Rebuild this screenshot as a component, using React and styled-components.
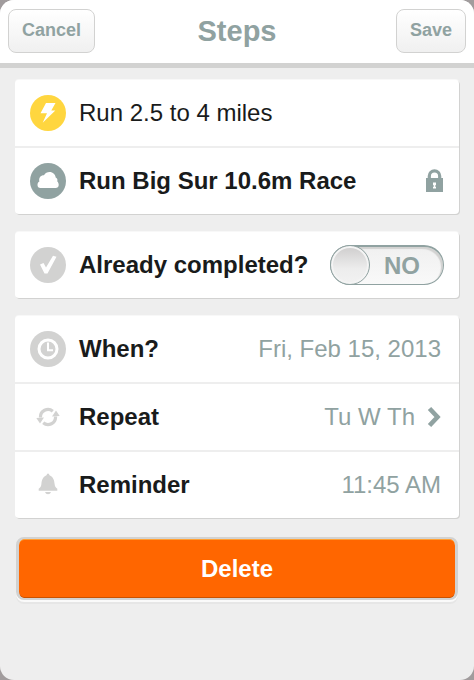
import React, { useState } from 'react';
import styled, { createGlobalStyle } from 'styled-components';

const slate = '#90a2a1';
const pale = '#d2d2d1';
const ink = '#191b1b';

const GlobalStyle = createGlobalStyle`
  * { box-sizing: border-box; }
  body {
    margin: 0;
    background: #a19c9d;
    font-family: 'Liberation Sans', Arial, Helvetica, sans-serif;
    color: ${ink};
  }
  button { font-family: inherit; cursor: pointer; }
`;

const Screen = styled.div`
  min-height: 100vh;
  background: #eeeeee;
  border-radius: 14px;
  overflow: hidden;
`;

const Header = styled.header`
  display: grid;
  grid-template-columns: 1fr auto 1fr;
  align-items: center;
  height: 68px;
  padding: 0 8px 1px;
  background: #ffffff;
  border-bottom: 5px solid ${pale};
`;

const Title = styled.h1`
  margin: 0;
  font-size: 29px;
  line-height: 36px;
  font-weight: bold;
  color: ${slate};
`;

const HeaderButton = styled.button`
  justify-self: ${(p) => p.$side};
  height: 44px;
  padding: 0 13px 2px;
  font-size: 18px;
  font-weight: bold;
  color: ${slate};
  background: linear-gradient(#ffffff, #f0f0f0);
  border: 1px solid ${pale};
  border-radius: 8px;
`;

const Main = styled.main`
  display: flex;
  flex-direction: column;
  gap: 18px;
  padding: 12px 15px 24px;
`;

const Card = styled.ul`
  margin: 0;
  padding: 0;
  list-style: none;
  background: #ffffff;
  border-radius: 4px;
  box-shadow: 1px 1px 0 ${pale}, 0 -1px 0 #f8f8f8;
`;

const Item = styled.li`
  & + & { border-top: 2px solid #eeeeee; }
`;

const Row = styled.div`
  display: flex;
  align-items: center;
  gap: 13px;
  width: 100%;
  height: 66px;
  padding: 0 ${(p) => (p.$flush ? 15 : 18)}px 0 15px;
  font-size: 24px;
  line-height: 28px;
  color: ${ink};
  text-align: left;
  background: none;
  border: 0;
`;

const Badge = styled.span`
  display: flex;
  flex: none;
  align-items: center;
  justify-content: center;
  width: 36px;
  height: 36px;
  border-radius: 50%;
  background: ${(p) => p.$fill || 'transparent'};
`;

const Label = styled.span`
  flex: 1;
  white-space: nowrap;
  font-weight: ${(p) => (p.$regular ? 'normal' : 'bold')};
`;

const Value = styled.span`
  display: flex;
  align-items: center;
  gap: 12px;
  white-space: nowrap;
  color: ${slate};
`;

const Toggle = styled.span`
  position: relative;
  display: flex;
  align-items: center;
  width: 114px;
  height: 40px;
  border: 1px solid ${slate};
  border-top-width: 2px;
  border-radius: 20px;
  background: linear-gradient(#f0f0f0, #f9f9f9);
  box-shadow: inset -2px 2px 1px ${pale};
`;

const ToggleInput = styled.input`
  position: absolute;
  inset: 0;
  width: 100%;
  height: 100%;
  margin: 0;
  opacity: 0;
  cursor: pointer;
`;

const Knob = styled.span`
  order: ${(p) => (p.$on ? 2 : 0)};
  width: 40px;
  height: 40px;
  margin: -2px -1px -1px;
  border: 1px solid ${slate};
  border-radius: 50%;
  background: linear-gradient(#d3d2d2 10%, #ededed 60%, #f2f2f2);
  box-shadow: inset 0 0 0 2px #f4f4f4;
`;

const ToggleText = styled.span`
  flex: 1;
  order: 1;
  padding: 0 8px 0 0;
  text-align: center;
  font-weight: bold;
  color: ${slate};
`;

const DeleteButton = styled.button`
  height: 63px;
  margin: 1px 1px 0;
  font-size: 24px;
  font-weight: bold;
  color: #ffffff;
  background: #ff6600;
  background-clip: padding-box;
  border: solid ${pale};
  border-width: 2px 3px;
  border-radius: 8px;
  box-shadow: inset 0 1px 0 #ffa033, inset 0 -1px 0 #c95200, 0 2px 0 #fafafa, 0 4px 0 #e6e6e6;
`;

const Bolt = () => (
  <svg width="16" height="20" viewBox="0 0 16 20" aria-hidden="true">
    <path d="M6 0H15.500L11.300 7.500H15.300L2.700 19.700L7 10.300H0.500Z" fill="#fff" />
  </svg>
);

const Cloud = () => (
  <svg width="22" height="18" viewBox="0 0 22 18" aria-hidden="true">
    <path d="M3.500 16C1.500 16 0.500 14.800 0.500 13C0.500 11.200 1.200 10 2.400 9.500C1.500 6 3.500 3.300 7 3.300C8.200 1 10.300 0 12.500 0C16 0 18.500 2.500 18.700 5.500C20.300 6.200 20.800 7.800 20.200 9.300C21.200 10.200 21.700 11.600 21.700 13C21.700 14.800 20.500 16 18.500 16Z" fill="#fff" />
  </svg>
);

const Check = () => (
  <svg width="18" height="20" viewBox="0 0 18 20" aria-hidden="true">
    <path d="M1 9.500L4.500 8L7 12.500L14 0.700L17.500 1.700L8.500 18.500H5.500Z" fill="#fff" />
  </svg>
);

const Clock = () => (
  <svg width="22" height="22" viewBox="0 0 22 22" fill="none" stroke="#fff" aria-hidden="true">
    <circle cx="11" cy="11" r="9" strokeWidth="3" />
    <path d="M11 4.500V12.200H16" strokeWidth="2" />
  </svg>
);

const Repeat = () => (
  <svg width="24" height="20" viewBox="0 0 24 20" aria-hidden="true">
    <g fill="none" stroke={pale} strokeWidth="3.200">
      <path d="M4.500 10.500A7.500 7.500 0 0 1 16.800 4.200" />
      <path d="M19.500 9.500A7.500 7.500 0 0 1 7.200 15.800" />
    </g>
    <path d="M20 3.500L23.700 9L16 9.500Z" fill={pale} />
    <path d="M4 16.500L0.300 11L8 10.500Z" fill={pale} />
  </svg>
);

const Bell = () => (
  <svg width="20" height="24" viewBox="0 0 20 24" fill={pale} aria-hidden="true">
    <path d="M8.500 2.300Q8.800 0.500 10 0.500T11.500 2.300C15.300 4 16.300 7.500 16.600 11C16.800 13.500 17.500 14.500 19.300 15.800V17.700H0.700V15.800C2.500 14.500 3.200 13.500 3.400 11C3.700 7.500 4.700 4 8.500 2.300Z" />
    <path d="M7 18.900H13Q12.300 21.300 10 21.300T7 18.900Z" />
  </svg>
);

const Lock = () => (
  <svg width="18" height="24" viewBox="0 0 18 24" role="img" aria-label="Locked">
    <path d="M3.300 10V7A5.200 5.200 0 0 1 13.700 7V10" fill="none" stroke={slate} strokeWidth="3.200" />
    <path d="M0 9H17V23H0Z" fill={slate} />
    <path d="M7 13.500H10V16H9.400V18H10V19.500H7V18H7.600V16H7Z" fill="#fff" />
  </svg>
);

const Chevron = () => (
  <svg width="14" height="22" viewBox="0 0 14 22" aria-hidden="true">
    <path d="M2.500 2.500L10.500 11L2.500 19.500" fill="none" stroke={slate} strokeWidth="4.600" />
  </svg>
);

const details = [
  { label: 'When?', value: 'Fri, Feb 15, 2013', icon: <Clock />, fill: pale },
  { label: 'Repeat', value: 'Tu W Th', icon: <Repeat />, chevron: true },
  { label: 'Reminder', value: '11:45 AM', icon: <Bell /> },
];

export default function App() {
  const [completed, setCompleted] = useState(false);

  return (
    <>
      <GlobalStyle />
      <Screen>
        <Header>
          <HeaderButton type="button" $side="start">Cancel</HeaderButton>
          <Title>Steps</Title>
          <HeaderButton type="button" $side="end">Save</HeaderButton>
        </Header>
        <Main>
          <Card>
            <Item>
              <Row>
                <Badge $fill="#ffd63f"><Bolt /></Badge>
                <Label $regular>Run 2.5 to 4 miles</Label>
              </Row>
            </Item>
            <Item>
              <Row $flush>
                <Badge $fill={slate}><Cloud /></Badge>
                <Label>Run Big Sur 10.6m Race</Label>
                <Lock />
              </Row>
            </Item>
          </Card>
          <Card>
            <Item>
              <Row $flush>
                <Badge $fill={pale}><Check /></Badge>
                <Label as="label" htmlFor="completed">Already completed?</Label>
                <Toggle>
                  <Knob $on={completed} />
                  <ToggleText aria-hidden="true">{completed ? 'YES' : 'NO'}</ToggleText>
                  <ToggleInput
                    id="completed"
                    type="checkbox"
                    role="switch"
                    checked={completed}
                    onChange={(e) => setCompleted(e.target.checked)}
                  />
                </Toggle>
              </Row>
            </Item>
          </Card>
          <Card>
            {details.map((d) => (
              <Item key={d.label}>
                <Row as="button" type="button">
                  <Badge $fill={d.fill}>{d.icon}</Badge>
                  <Label>{d.label}</Label>
                  <Value>
                    {d.value}
                    {d.chevron && <Chevron />}
                  </Value>
                </Row>
              </Item>
            ))}
          </Card>
          <DeleteButton type="button">Delete</DeleteButton>
        </Main>
      </Screen>
    </>
  );
}
